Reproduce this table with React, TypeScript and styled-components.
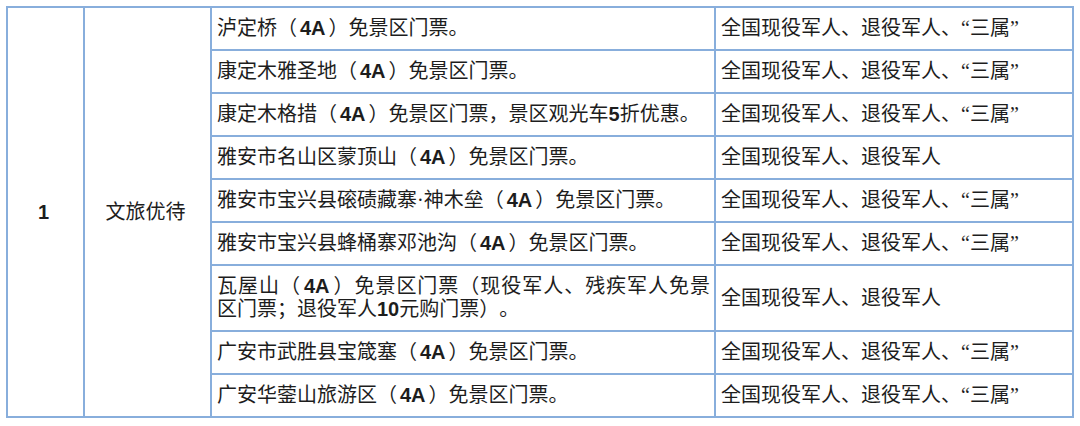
import React from "react";
import styled, { createGlobalStyle } from "styled-components";

const GlobalStyle = createGlobalStyle`
  html, body { margin: 0; padding: 0; background: #ffffff; }
  body { font-family: "Liberation Serif", "Noto Sans CJK SC", serif; }
`;

const Page = styled.div`
  padding: 6px 0 0 6px;
`;

const Table = styled.table`
  border-collapse: collapse;
  table-layout: fixed;
  width: 1066px;
  color: #1d1d1d;
  font-size: 20px;
  text-spacing-trim: space-all;
`;

const Col = styled.col<{ $w: number }>`
  width: ${(p) => p.$w}px;
`;

const Cell = styled.td<{ $h?: number; $center?: boolean }>`
  border: 2px solid #88aedc;
  height: ${(p) => p.$h ?? 41}px;
  padding: 0 4px 0 ${(p) => (p.$center ? 0 : 5)}px;
  vertical-align: middle;
  text-align: ${(p) => (p.$center ? "center" : "left")};
  line-height: 23px;
  white-space: nowrap;
  overflow: hidden;
`;

const IndexText = styled.span`
  font-family: "Liberation Sans", Arial, sans-serif;
  font-weight: 700;
  font-size: 20px;
`;

const Num = styled.b<{ $spaced?: boolean }>`
  font-family: "Liberation Sans", Arial, sans-serif;
  font-weight: 700;
  margin: 0 ${(p) => (p.$spaced ? 3 : 0)}px;
`;

const Line = styled.span<{ $justify?: boolean }>`
  display: block;
  text-align: ${(p) => (p.$justify ? "justify" : "left")};
  text-align-last: ${(p) => (p.$justify ? "justify" : "auto")};
`;

const FULL = "全国现役军人、退役军人、“三属”";
const SHORT = "全国现役军人、退役军人";

type Row = { desc: string[]; who: string; tall?: boolean };

const rows: Row[] = [
  { desc: ["泸定桥（4A）免景区门票。"], who: FULL },
  { desc: ["康定木雅圣地（4A）免景区门票。"], who: FULL },
  { desc: ["康定木格措（4A）免景区门票，景区观光车5折优惠。"], who: FULL },
  { desc: ["雅安市名山区蒙顶山（4A）免景区门票。"], who: SHORT },
  { desc: ["雅安市宝兴县磙碛藏寨·神木垒（4A）免景区门票。"], who: FULL },
  { desc: ["雅安市宝兴县蜂桶寨邓池沟（4A）免景区门票。"], who: FULL },
  {
    desc: ["瓦屋山（4A）免景区门票（现役军人、残疾军人免景", "区门票；退役军人10元购门票）。"],
    who: SHORT,
    tall: true,
  },
  { desc: ["广安市武胜县宝箴塞（4A）免景区门票。"], who: FULL },
  { desc: ["广安华蓥山旅游区（4A）免景区门票。"], who: FULL },
];

function RichText({ text }: { text: string }) {
  const parts = text.split(/([0-9]+A?)/);
  return (
    <>
      {parts.map((p, i) =>
        i % 2 === 1 ? (
          <Num key={i} $spaced={p.endsWith("A")}>
            {p}
          </Num>
        ) : (
          <React.Fragment key={i}>{p}</React.Fragment>
        )
      )}
    </>
  );
}

export default function App() {
  const total = rows.length;
  return (
    <>
      <GlobalStyle />
      <Page>
        <Table>
          <colgroup>
            <Col $w={77} />
            <Col $w={127} />
            <Col $w={504} />
            <Col $w={358} />
          </colgroup>
          <tbody>
            {rows.map((r, i) => (
              <tr key={i}>
                {i === 0 && (
                  <>
                    <Cell rowSpan={total} $center>
                      <IndexText>1</IndexText>
                    </Cell>
                    <Cell rowSpan={total} $center>
                      文旅优待
                    </Cell>
                  </>
                )}
                <Cell $h={r.tall ? 64 : 41}>
                  {r.desc.length > 1 ? (
                    r.desc.map((l, j) => (
                      <Line key={j} $justify={j < r.desc.length - 1}>
                        <RichText text={l} />
                      </Line>
                    ))
                  ) : (
                    <RichText text={r.desc[0]} />
                  )}
                </Cell>
                <Cell $h={r.tall ? 64 : 41}>{r.who}</Cell>
              </tr>
            ))}
          </tbody>
        </Table>
      </Page>
    </>
  );
}
